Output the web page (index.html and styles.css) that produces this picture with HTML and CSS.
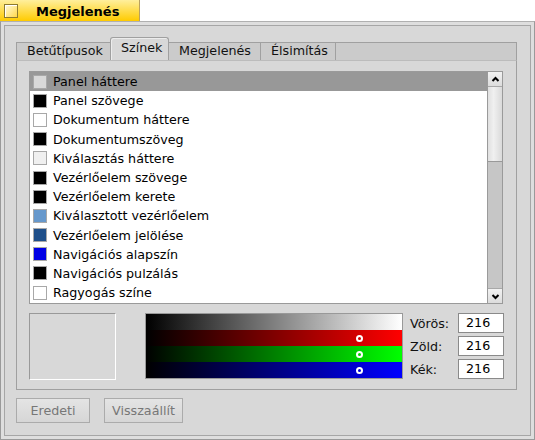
FILE: index.html
```html
<!DOCTYPE html>
<html>
<head>
<meta charset="utf-8">
<link rel="stylesheet" href="styles.css">
</head>
<body>
<div class="titletab"><span class="ticon"></span><span class="ttext">Megjelenés</span></div>
<div class="frame">
  <div class="content">
    <div class="tabview">
      <div class="tabs">
        <div class="tab first">Betűtípusok</div>
        <div class="tab sel">Színek</div>
        <div class="tab">Megjelenés</div>
        <div class="tab">Élsimítás</div>
        <div class="tabfill"></div>
      </div>
      <div class="tabbox">
        <div class="listwrap">
          <ul class="list">
            <li class="row selected"><span class="sw" style="background:#d8d8d8"></span>Panel háttere</li>
            <li class="row"><span class="sw" style="background:#000000"></span>Panel szövege</li>
            <li class="row"><span class="sw" style="background:#ffffff"></span>Dokumentum háttere</li>
            <li class="row"><span class="sw" style="background:#000000"></span>Dokumentumszöveg</li>
            <li class="row"><span class="sw" style="background:#f0f0f0"></span>Kiválasztás háttere</li>
            <li class="row"><span class="sw" style="background:#000000"></span>Vezérlőelem szövege</li>
            <li class="row"><span class="sw" style="background:#000000"></span>Vezérlőelem kerete</li>
            <li class="row"><span class="sw" style="background:#6698cc"></span>Kiválasztott vezérlőelem</li>
            <li class="row"><span class="sw" style="background:#1f4f8a"></span>Vezérlőelem jelölése</li>
            <li class="row"><span class="sw" style="background:#0000e5"></span>Navigációs alapszín</li>
            <li class="row"><span class="sw" style="background:#000000"></span>Navigációs pulzálás</li>
            <li class="row"><span class="sw" style="background:#ffffff"></span>Ragyogás színe</li>
          </ul>
          <div class="scrollbar">
            <div class="sbtn"><svg width="13" height="13" viewBox="0 0 13 13"><polyline points="3.5,8 6.5,5 9.5,8" fill="none" stroke="#000" stroke-width="2"/></svg></div>
            <div class="thumb"></div>
            <div class="trough"></div>
            <div class="sbtn"><svg width="13" height="13" viewBox="0 0 13 13"><polyline points="3.5,5 6.5,8 9.5,5" fill="none" stroke="#000" stroke-width="2"/></svg></div>
          </div>
        </div>
        <div class="pickerrow">
          <div class="preview"></div>
          <div class="picker">
            <div class="band gray"></div>
            <div class="band red"><span class="knob"></span></div>
            <div class="band green"><span class="knob"></span></div>
            <div class="band blue"><span class="knob"></span></div>
          </div>
          <div class="fields">
            <div class="field"><span class="lbl">Vörös:</span><span class="inp">216</span></div>
            <div class="field"><span class="lbl">Zöld:</span><span class="inp">216</span></div>
            <div class="field"><span class="lbl">Kék:</span><span class="inp">216</span></div>
          </div>
        </div>
      </div>
    </div>
    <div class="buttons">
      <div class="btn b1">Eredeti</div>
      <div class="btn b2">Visszaállít</div>
    </div>
  </div>
</div>
</body>
</html>
```

FILE: styles.css
```css
* { box-sizing: border-box; }
html, body { margin: 0; padding: 0; }
body {
  width: 535px;
  height: 440px;
  overflow: hidden;
  background: #ffffff;
  font-family: "DejaVu Sans", sans-serif;
  font-size: 12.7px;
  color: #000;
}
.titletab {
  width: 140px;
  height: 21px;
  background: linear-gradient(#ffef9c, #ffcb00);
  border-right: 1px solid #b8a060;
  display: flex;
  align-items: center;
}
.ticon {
  width: 14px;
  height: 14px;
  margin-left: 4px;
  border: 1px solid #8c7a30;
  background: linear-gradient(135deg, #fffbe0, #ffd84a);
  box-shadow: inset 1px 1px 0 #ffffff;
}
.ttext {
  font-weight: bold;
  font-size: 13px;
  margin-left: 18px;
  margin-top: 1px;
}
.frame {
  width: 535px;
  height: 419px;
  border: 1px solid #9a9a9a;
  border-top-color: #b0b0b0;
  background: #dedede;
  padding: 3px;
}
.content {
  width: 100%;
  height: 100%;
  border: 1px solid #a6a6a6;
  background: #d8d8d8;
  padding: 11px 12px 0 11px;
}
.tabview { width: 501px; }
.tabs {
  display: flex;
  align-items: flex-end;
  height: 23px;
}
.tab {
  flex: none;
  height: 18px;
  background: #cbcbcb;
  border-top: 1px solid #a0a0a0;
  border-right: 1px solid #a0a0a0;
  padding: 0 0 0 10px;
  line-height: 16px;
  color: #111;
  white-space: nowrap;
  overflow: hidden;
}
.tab.first { border-left: 1px solid #a0a0a0; }
.tab:nth-child(1) { width: 95px; }
.tab:nth-child(2) { width: 59px; }
.tab:nth-child(3) { width: 92px; }
.tab:nth-child(4) { width: 75px; }
.tab.sel {
  height: 23px;
  background: #d8d8d8;
  border: 1px solid #a0a0a0;
  border-bottom: none;
  border-radius: 3px 3px 0 0;
  margin-left: -1px;
  line-height: 19px;
  padding-left: 10px;
  box-shadow: inset 1px 1px 0 #ececec;
}
.tabfill {
  flex: 1;
  height: 18px;
  background: #cbcbcb;
  border-top: 1px solid #a0a0a0;
  border-right: 1px solid #a0a0a0;
}
.tabbox {
  height: 330px;
  border: 1px solid #a0a0a0;
  border-top: 1px solid #bcbcbc;
  padding: 10px 13px 0 12px;
}
.listwrap {
  height: 233px;
  border: 1px solid #9a9a9a;
  display: flex;
  background: #fff;
}
.list {
  list-style: none;
  margin: 0;
  padding: 0;
  flex: 1;
}
.row {
  height: 19.2px;
  display: flex;
  align-items: center;
  padding-left: 3px;
  white-space: nowrap;
}
.row.selected { background: #989898; }
.sw {
  width: 14px;
  height: 14px;
  border: 1px solid #a8a8a8;
  margin-right: 6px;
  flex: none;
}
.scrollbar {
  width: 15px;
  flex: none;
  display: flex;
  flex-direction: column;
  border-left: 1px solid #9a9a9a;
  background: #c4c4c4;
}
.sbtn {
  height: 15px;
  background: linear-gradient(#f2f2f2, #dcdcdc);
  border-bottom: 1px solid #a8a8a8;
  display: flex;
  align-items: center;
  justify-content: center;
}
.sbtn:last-child { border-bottom: none; border-top: 1px solid #a8a8a8; }
.thumb {
  height: 75px;
  background: linear-gradient(90deg, #e0e0e0, #f0f0f0 40%, #dadada);
  border-bottom: 1px solid #999;
}
.trough { flex: 1; background: #c6c6c6; }
.pickerrow {
  display: flex;
  margin-top: 9px;
  height: 66px;
}
.preview {
  flex: none;
  width: 87px;
  height: 67px;
  background: #d8d8d8;
  border: 1px solid #ffffff;
  border-top-color: #999;
  border-left-color: #999;
}
.picker {
  flex: none;
  width: 258px;
  height: 66px;
  margin-left: 29px;
  border: 1px solid #999;
  display: flex;
  flex-direction: column;
}
.band { height: 16px; position: relative; }
.gray { background: linear-gradient(90deg, #000000, #ffffff); }
.red { background: linear-gradient(90deg, #000000, #ff0000); }
.green { background: linear-gradient(90deg, #000000, #00ff00); }
.blue { background: linear-gradient(90deg, #000000, #0000ff); }
.knob {
  position: absolute;
  left: 210px;
  top: 5px;
  width: 7px;
  height: 7px;
  border: 2px solid #fff;
  border-radius: 50%;
}
.fields {
  flex: none;
  margin-left: 7px;
  display: flex;
  flex-direction: column;
  gap: 3px;
}
.field {
  display: flex;
  align-items: center;
  height: 20px;
}
.lbl { flex: none; width: 48px; color: #111; }
.inp {
  flex: none;
  width: 46px;
  height: 20px;
  background: #fff;
  border: 1px solid #8a8a8a;
  padding-left: 7px;
  line-height: 18px;
}
.buttons {
  display: flex;
  gap: 14px;
  margin-top: 8px;
}
.btn {
  height: 25px;
  border: 1px solid #ababab;
  background: linear-gradient(#e4e4e4, #d6d6d6);
  color: #777;
  display: flex;
  align-items: center;
  justify-content: center;
}
.b1 { width: 74px; }
.b2 { width: 79px; }
```
